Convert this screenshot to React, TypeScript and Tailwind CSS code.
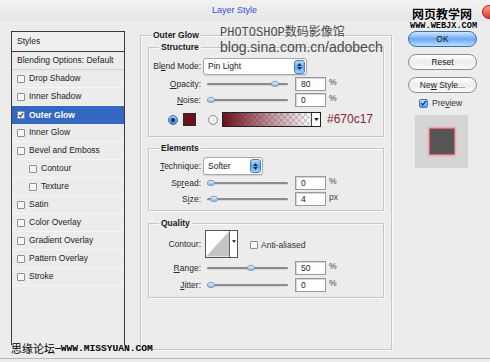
import React from "react";

const font = "font-['Liberation_Sans',Arial,sans-serif]";

const Check = () => (
  <svg viewBox="0 0 10 10" className="w-[8px] h-[8px]">
    <path d="M1.5 5.2 L4 7.8 L8.8 1.8" fill="none" stroke="#1f3f86" strokeWidth="1.8" />
  </svg>
);

const Box = ({ checked = false }: { checked?: boolean }) => (
  <span className="flex h-[8px] w-[8px] shrink-0 items-center justify-center rounded-[1px] border border-[#8f8f8f] bg-[#f7f7f7]">
    {checked && <Check />}
  </span>
);

const styleRows: { label: string; indent?: boolean; active?: boolean }[] = [
  { label: "Drop Shadow" },
  { label: "Inner Shadow" },
  { label: "Outer Glow", active: true },
  { label: "Inner Glow" },
  { label: "Bevel and Emboss" },
  { label: "Contour", indent: true },
  { label: "Texture", indent: true },
  { label: "Satin" },
  { label: "Color Overlay" },
  { label: "Gradient Overlay" },
  { label: "Pattern Overlay" },
  { label: "Stroke" },
];

const StylesList = () => (
  <div className="mt-[10px] ml-[11px] h-[314px] w-[114px] shrink-0 border-x border-[#3c3c3c]">
    <div className="flex h-[21px] items-center border-y border-[#3c3c3c] bg-[#efefef] pl-[5px]">Styles</div>
    <div className="flex h-[18px] items-center border-b border-[#d2d2d2] pl-[5px]">Blending Options: Default</div>
    {styleRows.map((r) => (
      <div
        key={r.label}
        className={
          r.active
            ? "flex h-[18px] items-center bg-[#3268c2] pl-[5px] font-bold text-white"
            : r.indent
            ? "flex h-[18px] items-center border-b border-[#f6f6f6] pl-[17px]"
            : "flex h-[18px] items-center border-b border-[#f6f6f6] pl-[5px]"
        }
      >
        <Box checked={r.active} />
        <span className="ml-[4px]">{r.label}</span>
      </div>
    ))}
  </div>
);

const Legend = ({ children }: { children: React.ReactNode }) => (
  <div className="-mt-[6px] -mb-[5px] ml-[10px] h-[11px] w-fit bg-[#ececec] px-[2px] font-bold leading-[11px] text-[#1a1a1a]">
    {children}
  </div>
);

const Group = ({ title, className, children }: { title: string; className: string; children: React.ReactNode }) => (
  <div className={"border border-[#c6c6c6] shadow-[inset_1px_1px_0_#fafafa,1px_1px_0_#fafafa] " + className}>
    <Legend>{title}</Legend>
    {children}
  </div>
);

const Label = ({ pre, u, post }: { pre: string; u: string; post: string }) => (
  <span className="w-[52px] shrink-0 text-right text-[#2a2a2a]">
    {pre}
    <span className="underline underline-offset-[1px]">{u}</span>
    {post}
  </span>
);

const Spinner = () => (
  <span className="flex h-[14px] w-[11px] flex-col items-center justify-center gap-[1px] rounded-[3px] border border-[#4b7fc4] bg-gradient-to-b from-[#b8dcff] via-[#5ea4f0] to-[#9fd0ff]">
    <svg viewBox="0 0 6 4" className="h-[3px] w-[5px]"><path d="M3 0 L6 4 L0 4Z" fill="#1c2c48" /></svg>
    <svg viewBox="0 0 6 4" className="h-[3px] w-[5px]"><path d="M0 0 L6 0 L3 4Z" fill="#1c2c48" /></svg>
  </span>
);

const Select = ({ value, w }: { value: string; w: string }) => (
  <div className={"ml-[2px] flex items-center justify-between rounded-[3px] border border-[#a9a9a9] bg-white pl-[4px] pr-[1px] shadow-[0_1px_1px_#d0d0d0] " + w}>
    <span className="text-[#1a1a1a]">{value}</span>
    <Spinner />
  </div>
);

const Slider = ({ pos }: { pos: number }) => (
  <div className="relative ml-[6px] h-[6px] w-[81px]">
    <div className="absolute top-[2px] left-0 right-0 h-[2px] rounded-full bg-[#8c8c8c] shadow-[0_1px_0_#d8d8d8]" />
    <div
      className="absolute top-0 h-[6px] w-[8px] rounded-full border border-[#7c9cc8] bg-gradient-to-b from-[#e6f1ff] to-[#8ab4e8]"
      style={{ left: pos }}
    />
  </div>
);

const Field = ({ value, unit }: { value: string; unit: string }) => (
  <>
    <div className="ml-[7px] flex h-[14px] w-[31px] items-center border border-[#9a9a9a] bg-white pl-[5px] shadow-[inset_1px_1px_0_#d6d6d6]">
      {value}
    </div>
    <span className="ml-[3px] self-start text-[#444]">{unit}</span>
  </>
);

const SliderRow = ({ label, pos, value, unit, mt }: { label: [string, string, string]; pos: number; value: string; unit: string; mt: string }) => (
  <div className={"flex h-[14px] items-center " + mt}>
    <Label pre={label[0]} u={label[1]} post={label[2]} />
    <Slider pos={pos} />
    <Field value={value} unit={unit} />
  </div>
);

const Radio = ({ on }: { on?: boolean }) =>
  on ? (
    <span className="flex h-[10px] w-[10px] items-center justify-center rounded-full border border-[#3b6fb4] bg-gradient-to-b from-[#9fd0ff] to-[#3d86e0]">
      <span className="h-[4px] w-[4px] rounded-full bg-[#142848]" />
    </span>
  ) : (
    <span className="block h-[10px] w-[10px] rounded-full border border-[#8a8a8a] bg-gradient-to-b from-[#ffffff] to-[#e4e4e4]" />
  );

const Middle = () => (
  <div className="mt-[14px] ml-[15px] h-[315px] w-[252px] shrink-0 border border-[#c6c6c6] shadow-[inset_1px_1px_0_#fafafa,1px_1px_0_#fafafa]">
    <Legend>Outer Glow</Legend>
    <Group title="Structure" className="mt-[11px] ml-[7px] h-[90px] w-[236px]">
      <div className="mt-[10px] flex h-[17px] items-center">
        <Label pre="Bl" u="e" post="nd Mode:" />
        <Select value="Pin Light" w="h-[17px] w-[104px]" />
      </div>
      <SliderRow label={["", "O", "pacity:"]} pos={64} value="80" unit="%" mt="mt-[2px]" />
      <SliderRow label={["", "N", "oise:"]} pos={0} value="0" unit="%" mt="mt-[2px]" />
      <div className="mt-[5px] flex h-[15px] items-center">
        <span className="ml-[19px] block"><Radio on /></span>
        <span className="ml-[5px] h-[13px] w-[13px] border border-[#2a2a2a] bg-[#6e0f1e]" />
        <span className="ml-[12px] block"><Radio /></span>
        <div className="ml-[4px] flex h-[15px] w-[99px] border border-[#222]">
          <div className="flex-1 bg-[repeating-conic-gradient(#d4d4d4_0_25%,#ffffff_0_50%)] bg-[length:6px_6px]">
            <div className="h-full w-full bg-gradient-to-r from-[#6a0f1d] via-[#8a3a48]/60 to-transparent" />
          </div>
          <div className="flex w-[9px] items-center justify-center border-l border-[#444] bg-white">
            <svg viewBox="0 0 6 4" className="h-[3px] w-[5px]"><path d="M0 0 L6 0 L3 4Z" fill="#111" /></svg>
          </div>
        </div>
        <span className="ml-[6px] text-[12px] text-[#8c2232]">#670c17</span>
      </div>
    </Group>
    <Group title="Elements" className="mt-[11px] ml-[7px] h-[63px] w-[236px]">
      <div className="mt-[8px] flex h-[18px] items-center">
        <Label pre="" u="T" post="echnique:" />
        <Select value="Softer" w="h-[18px] w-[60px]" />
      </div>
      <SliderRow label={["Sp", "r", "ead:"]} pos={0} value="0" unit="%" mt="mt-[1px]" />
      <SliderRow label={["S", "i", "ze:"]} pos={3} value="4" unit="px" mt="mt-[2px]" />
    </Group>
    <Group title="Quality" className="mt-[12px] ml-[7px] h-[75px] w-[236px]">
      <div className="mt-[6px] flex h-[28px] items-center">
        <span className="w-[52px] shrink-0 text-right text-[#2a2a2a]">Contour:</span>
        <div className="ml-[4px] flex h-[28px] w-[33px] border border-[#555] bg-white">
          <svg viewBox="0 0 24 26" className="h-full flex-1">
            <path d="M0 26 L24 0 L24 26Z" fill="#c4c4c4" />
          </svg>
          <div className="flex w-[8px] justify-center border-l border-[#666] pt-[9px]">
            <svg viewBox="0 0 6 4" className="h-[3px] w-[4px]"><path d="M0 0 L6 0 L3 4Z" fill="#111" /></svg>
          </div>
        </div>
        <span className="ml-[12px] mt-[2px] flex items-center">
          <Box />
          <span className="ml-[3px] text-[#333]">Anti-aliased</span>
        </span>
      </div>
      <SliderRow label={["", "R", "ange:"]} pos={40} value="50" unit="%" mt="mt-[3px]" />
      <SliderRow label={["", "J", "itter:"]} pos={0} value="0" unit="%" mt="mt-[3px]" />
    </Group>
  </div>
);

const Pill = ({ children, primary }: { children: React.ReactNode; primary?: boolean }) => (
  <div
    className={
      primary
        ? "flex h-[16px] items-center justify-center rounded-full border border-[#3f6ea8] bg-gradient-to-b from-[#d2e8ff] via-[#6aaaf0] to-[#b8e0ff] text-[#111]"
        : "mt-[7px] flex h-[16px] items-center justify-center rounded-full border border-[#8c8c8c] bg-gradient-to-b from-[#ffffff] via-[#ececec] to-[#fbfbfb] text-[#222]"
    }
  >
    {children}
  </div>
);

const Right = () => (
  <div className="mt-[10px] ml-[16px] w-[69px] shrink-0">
    <Pill primary>OK</Pill>
    <Pill>Reset</Pill>
    <Pill>
      Ne<span className="underline underline-offset-[1px]">w</span>&nbsp;Style...
    </Pill>
    <div className="mt-[5px] ml-[11px] flex h-[10px] items-center">
      <span className="flex h-[9px] w-[9px] items-center justify-center rounded-[2px] border border-[#4a78b8] bg-gradient-to-b from-[#bfe0ff] to-[#5c9ae4]">
        <Check />
      </span>
      <span className="ml-[4px] text-[#333]">
        Pre<span className="underline underline-offset-[1px]">v</span>iew
      </span>
    </div>
    <div className="mt-[7px] ml-[7px] flex h-[53px] w-[53px] items-center justify-center bg-[#d5d5d5]">
      <div className="h-[27px] w-[26px] rounded-[1px] border border-[#d86878] bg-[#565656] shadow-[0_0_2px_1px_#f39aa6]" />
    </div>
  </div>
);

export default function App() {
  return (
    <div className={"relative h-[362px] w-[490px] overflow-hidden bg-[#ececec] text-[8.5px] leading-[11px] text-[#222] " + font}>
      <div className="flex h-[21px] items-center bg-gradient-to-b from-[#f2f2f2] to-[#e6e6e6] pl-[212px] text-[9px] text-[#3c4fd2]">
        Layer Style
      </div>
      <div className="flex">
        <StylesList />
        <Middle />
        <Right />
      </div>

      {/* watermarks and title-bar button lie over the dialog */}
      <span className="absolute top-[5px] right-[-6px] h-[14px] w-[14px] rounded-full border border-[#a02020] bg-gradient-to-b from-[#ff9a8a] to-[#d8302a]" />
      <div className="absolute top-[24px] left-[220px] text-[#4a4a4a]">
        <div className="flex h-[13px] items-baseline whitespace-nowrap">
          <span className="font-['Liberation_Mono',monospace] text-[12px] leading-[13px]">PHOTOSHOP</span>
          <span className="font-['Noto_Sans_CJK_SC',sans-serif] text-[12px] leading-[13px]">数码影像馆</span>
        </div>
        <div className="mt-[3px] text-[14px] leading-[14px]">blog.sina.com.cn/adobech</div>
      </div>
      <div className="absolute top-[6px] left-[412px] font-['Noto_Sans_CJK_SC',sans-serif] text-[12px] leading-[15px] font-bold text-black [text-shadow:0_0_2px_#fff,0_0_2px_#fff]">
        网页教学网
      </div>
      <div className="absolute top-[22px] left-[410px] font-['Liberation_Mono',monospace] text-[8.6px] leading-[9px] font-bold text-black [text-shadow:0_0_1px_#fff]">
        WWW.WEBJX.COM
      </div>
      <div className="absolute top-[342px] left-[11px] flex items-center text-black">
        <span className="font-['Noto_Sans_CJK_SC',sans-serif] text-[11px] leading-[13px]">思缘论坛</span>
        <span className="font-['Liberation_Mono',monospace] text-[9.6px] leading-[13px] font-bold">—WWW.MISSYUAN.COM</span>
      </div>
      <div className="absolute bottom-[3px] left-0 right-0 h-px bg-[#b8b8b8]" />
    </div>
  );
}
